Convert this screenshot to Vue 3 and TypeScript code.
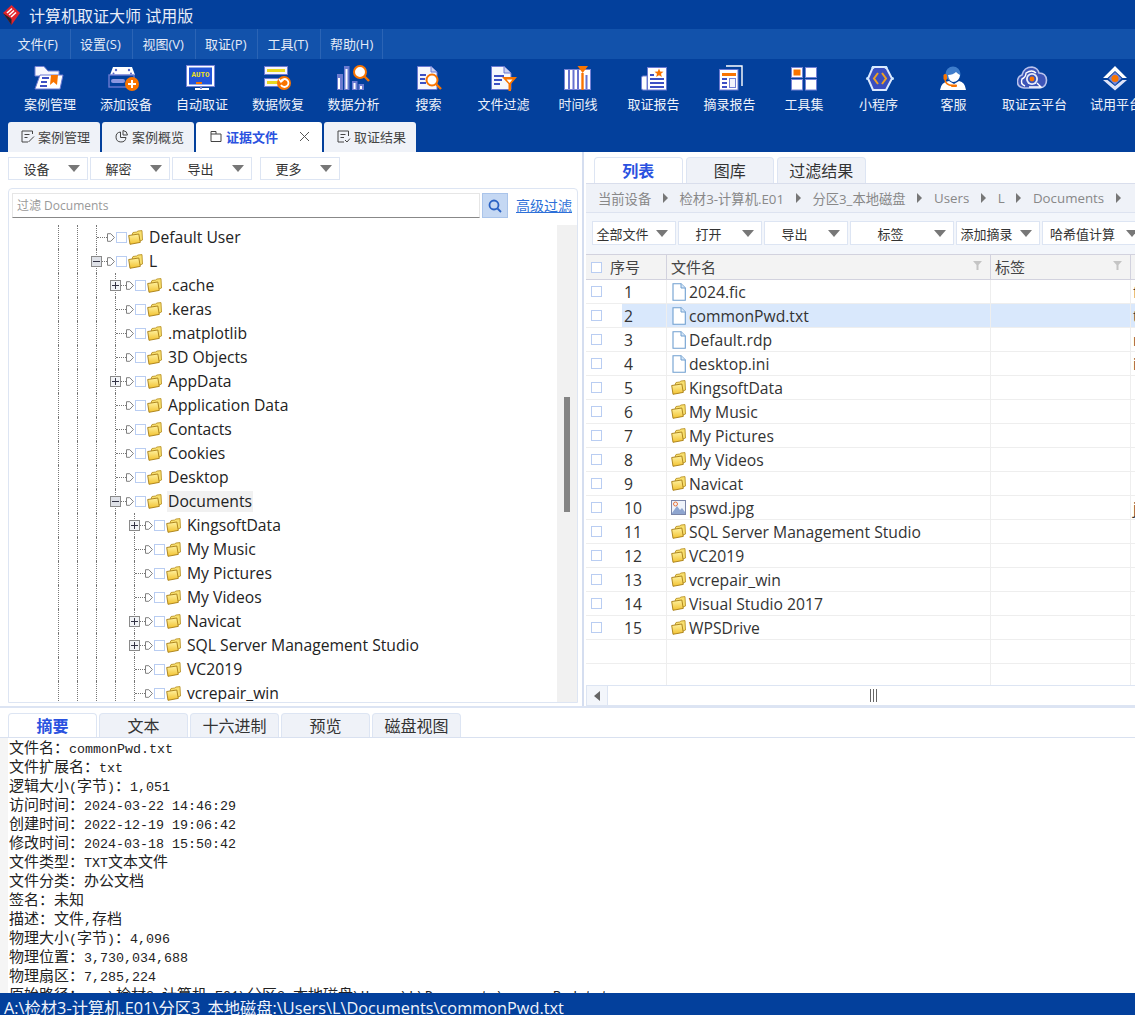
<script setup lang="ts">
interface Tool { label: string; icon: string; w: number }
interface Btn { label: string; w: number; mr?: number }
interface TreeRow { name: string; level: number; exp?: '+' | '-'; hover?: boolean }
interface FileRow { no: number; name: string; kind: 'file' | 'folder' | 'img'; ext?: string; sel?: boolean }

const menus = ['文件(F)', '设置(S)', '视图(V)', '取证(P)', '工具(T)', '帮助(H)']
const tools: Tool[] = [
  { label: '案例管理', icon: 'case', w: 76 },
  { label: '添加设备', icon: 'add', w: 76 },
  { label: '自动取证', icon: 'auto', w: 76 },
  { label: '数据恢复', icon: 'recover', w: 76 },
  { label: '数据分析', icon: 'analysis', w: 75 },
  { label: '搜索', icon: 'search', w: 75 },
  { label: '文件过滤', icon: 'filter', w: 75 },
  { label: '时间线', icon: 'timeline', w: 74 },
  { label: '取证报告', icon: 'report', w: 77 },
  { label: '摘录报告', icon: 'excerpt', w: 75 },
  { label: '工具集', icon: 'tools', w: 74 },
  { label: '小程序', icon: 'mini', w: 75 },
  { label: '客服', icon: 'service', w: 75 },
  { label: '取证云平台', icon: 'cloud', w: 87 },
  { label: '试用平台', icon: 'trial', w: 76 },
]
const leftBtns: Btn[] = [
  { label: '设备', w: 80, mr: 2 },
  { label: '解密', w: 80, mr: 2 },
  { label: '导出', w: 80, mr: 8 },
  { label: '更多', w: 80 },
]
const rightBtns: Btn[] = [
  { label: '全部文件', w: 84, mr: 2 },
  { label: '打开', w: 84, mr: 2 },
  { label: '导出', w: 84, mr: 2 },
  { label: '标签', w: 104, mr: 2 },
  { label: '添加摘录', w: 84, mr: 2 },
  { label: '哈希值计算', w: 104 },
]
const tree: TreeRow[] = [
  { name: 'Default User', level: 0 },
  { name: 'L', level: 0, exp: '-' },
  { name: '.cache', level: 1, exp: '+' },
  { name: '.keras', level: 1 },
  { name: '.matplotlib', level: 1 },
  { name: '3D Objects', level: 1 },
  { name: 'AppData', level: 1, exp: '+' },
  { name: 'Application Data', level: 1 },
  { name: 'Contacts', level: 1 },
  { name: 'Cookies', level: 1 },
  { name: 'Desktop', level: 1 },
  { name: 'Documents', level: 1, exp: '-', hover: true },
  { name: 'KingsoftData', level: 2, exp: '+' },
  { name: 'My Music', level: 2 },
  { name: 'My Pictures', level: 2 },
  { name: 'My Videos', level: 2 },
  { name: 'Navicat', level: 2, exp: '+' },
  { name: 'SQL Server Management Studio', level: 2, exp: '+' },
  { name: 'VC2019', level: 2 },
  { name: 'vcrepair_win', level: 2 },
]
const crumbs = ['当前设备', '检材3-计算机.E01', '分区3_本地磁盘', 'Users', 'L', 'Documents']
const files: FileRow[] = [
  { no: 1, name: '2024.fic', kind: 'file', ext: 'fic' },
  { no: 2, name: 'commonPwd.txt', kind: 'file', ext: 'txt', sel: true },
  { no: 3, name: 'Default.rdp', kind: 'file', ext: 'rdp' },
  { no: 4, name: 'desktop.ini', kind: 'file', ext: 'ini' },
  { no: 5, name: 'KingsoftData', kind: 'folder' },
  { no: 6, name: 'My Music', kind: 'folder' },
  { no: 7, name: 'My Pictures', kind: 'folder' },
  { no: 8, name: 'My Videos', kind: 'folder' },
  { no: 9, name: 'Navicat', kind: 'folder' },
  { no: 10, name: 'pswd.jpg', kind: 'img', ext: 'jpg' },
  { no: 11, name: 'SQL Server Management Studio', kind: 'folder' },
  { no: 12, name: 'VC2019', kind: 'folder' },
  { no: 13, name: 'vcrepair_win', kind: 'folder' },
  { no: 14, name: 'Visual Studio 2017', kind: 'folder' },
  { no: 15, name: 'WPSDrive', kind: 'folder' },
]
const bottomTabs = ['摘要', '文本', '十六进制', '预览', '磁盘视图']
const summary = [
  '文件名：commonPwd.txt',
  '文件扩展名：txt',
  '逻辑大小(字节)：1,051',
  '访问时间：2024-03-22 14:46:29',
  '创建时间：2022-12-19 19:06:42',
  '修改时间：2024-03-18 15:50:42',
  '文件类型：TXT文本文件',
  '文件分类：办公文档',
  '签名：未知',
  '描述：文件,存档',
  '物理大小(字节)：4,096',
  '物理位置：3,730,034,688',
  '物理扇区：7,285,224',
  '原始路径：...\\检材3-计算机.E01\\分区3_本地磁盘\\Users\\L\\Documents\\commonPwd.txt',
]
const segs = (s: string) =>
  s.split(/([\x00-\x7f]+)/).filter(Boolean).map((t) => ({ t, mono: /^[\x00-\x7f]+$/.test(t) }))
</script>

<template>
  <div class="app">
    <svg class="defs" width="0" height="0">
      <defs>
        <linearGradient id="fy" x1="0" y1="0" x2="0" y2="1">
          <stop offset="0" stop-color="#fff2a0" />
          <stop offset="1" stop-color="#f2c230" />
        </linearGradient>
        <symbol id="folder" viewBox="0 0 15 15">
          <path d="M4 4.5 L5 2.5 L8.5 2 L10 1 L14 .6 L14.5 10 L12 11 Z" fill="#f8df6e" stroke="#b48a1a" stroke-width=".8" />
          <path d="M.7 5.5 L10.8 4 L12.3 12.4 L2 14.3 Z" fill="url(#fy)" stroke="#a67c14" stroke-width=".9" />
        </symbol>
        <symbol id="file" viewBox="0 0 14 18">
          <path d="M1 .7 H9 L13.3 5 V17.3 H1 Z" fill="#fff" stroke="#6f9fd0" stroke-width="1.1" />
          <path d="M9 .7 V5 H13.3" fill="#d9e8f7" stroke="#6f9fd0" stroke-width="1" />
        </symbol>
        <symbol id="img" viewBox="0 0 15 15">
          <rect x=".5" y=".5" width="14" height="14" fill="#eef3fb" stroke="#7b86a8" />
          <path d="M1 13 L6 6 L9 10 L11 8 L14 12 V14 H1 Z" fill="#8ea5cf" />
          <circle cx="4.5" cy="4" r="2" fill="none" stroke="#e9743a" />
        </symbol>
        <symbol id="arrow" viewBox="0 0 8 9">
          <path d="M.5 .7 H3.8 L7.4 4.5 L3.8 8.3 H.5 Z" fill="#fff" stroke="#808080" />
        </symbol>
      </defs>
    </svg>

    <header class="head">
      <div class="title">
        <svg class="logo" width="17" height="20" viewBox="0 0 17 20">
          <path d="M8.5 0 L17 8 L8.5 20 L0 8 Z" fill="#e0242e" />
          <path d="M0 8 L8.5 20 V14 Z" fill="#23242c" />
          <path d="M4 8 L9 3.5 M6 10 L11 5.5 M8 12 L13 7.5" stroke="#fff" stroke-width="1.6" />
        </svg>
        <span>计算机取证大师 试用版</span>
      </div>
      <nav class="menu">
        <span v-for="m in menus" :key="m" class="menu-item">{{ m }}</span>
      </nav>
      <div class="tools">
        <div v-for="t in tools" :key="t.icon" class="tool" :style="{ width: t.w + 'px' }">
          <svg class="tool-ic" width="36" height="26" viewBox="0 0 36 26">
            <template v-if="t.icon === 'case'">
              <path d="M3 1.5 H12 L16 6 H27 V11 H3 Z" fill="#f6f7fd" stroke="#7582d6" />
              <path d="M8 10 H31 L28 24 H3 Z" fill="#fff" stroke="#6b79d2" />
              <path d="M10 13 H17 M9 17 H15 M8 21 H15" stroke="#3d50c4" stroke-width="2" />
              <path d="M19 10 H26 L25 20 L21.5 17 L18 20 Z" fill="#f97400" />
            </template>
            <template v-else-if="t.icon === 'add'">
              <path d="M5 2 H24 L27 10 H2 Z" fill="#fff" />
              <circle cx="8" cy="5" r="1.2" fill="#5566c8" /><circle cx="21" cy="5" r="1.2" fill="#5566c8" />
              <circle cx="5.5" cy="8.5" r="1" fill="#5566c8" /><circle cx="23" cy="8.5" r="1" fill="#5566c8" />
              <rect x="1" y="10" width="25" height="12" fill="none" stroke="#6b79d2" stroke-width="1.4" />
              <rect x="3" y="14" width="14" height="4" rx="2" fill="#8a97e0" />
              <circle cx="24" cy="19" r="7" fill="#f97400" />
              <path d="M20 19 H28 M24 15 V23" stroke="#fff" stroke-width="2" />
            </template>
            <template v-else-if="t.icon === 'auto'">
              <rect x="4" y="1.5" width="25" height="19" fill="#2255d8" stroke="#fff" stroke-width="2" />
              <rect x="2.5" y="0.5" width="28" height="21" fill="none" stroke="#7582d6" />
              <text x="16.5" y="12" text-anchor="middle" class="auto-text">AUTO</text>
              <rect x="12" y="17" width="6" height="2" fill="#f97400" />
              <path d="M11 24 H25" stroke="#fff" stroke-width="2" />
              <path d="M17 21 V24" stroke="#7582d6" stroke-width="2" />
            </template>
            <template v-else-if="t.icon === 'recover'">
              <rect x="4.5" y="1.5" width="23" height="8" fill="#f4f5fd" stroke="#6b79d2" />
              <rect x="7" y="4" width="18" height="3" fill="#e8d820" />
              <rect x="4.5" y="13.5" width="20" height="8" fill="#f4f5fd" stroke="#6b79d2" />
              <rect x="7" y="16" width="12" height="3" fill="#e8d820" />
              <circle cx="24" cy="18" r="7" fill="#f97400" />
              <path d="M21 16 A4 4 0 1 1 21 20" fill="none" stroke="#fff" stroke-width="1.8" />
              <path d="M19 14 L21 17 L23.5 15" fill="none" stroke="#fff" stroke-width="1.4" />
            </template>
            <template v-else-if="t.icon === 'analysis'">
              <rect x="1" y="9" width="6" height="16" fill="#6c7bd0" />
              <rect x="8" y="1" width="5.5" height="24" fill="#6c7bd0" />
              <rect x="16" y="16" width="5.5" height="9" fill="#6c7bd0" />
              <rect x="22.5" y="19" width="5.5" height="6" fill="#6c7bd0" />
              <path d="M3 13 V24 M10.5 4 V24 M18.5 18 V24 M25 21 V24" stroke="#fff" stroke-width="2" />
              <path d="M28 11 L33 16" stroke="#f97400" stroke-width="2.4" />
              <circle cx="24" cy="7" r="6" fill="#fff" stroke="#f97400" stroke-width="2" />
            </template>
            <template v-else-if="t.icon === 'search'">
              <path d="M6.5 1.5 H20 L26 7 V24.5 H6.5 Z" fill="#f6f7fd" stroke="#6b79d2" />
              <path d="M20 1.5 V7 H26" fill="#c9cff0" stroke="#6b79d2" />
              <path d="M9 10 H15 M9 14 H14 M9 18 H15" stroke="#3d50c4" stroke-width="2" />
              <path d="M25 19 L30 24" stroke="#f97400" stroke-width="2.4" />
              <circle cx="21" cy="15" r="5.5" fill="#fff" stroke="#f97400" stroke-width="2" />
            </template>
            <template v-else-if="t.icon === 'filter'">
              <path d="M5.5 1.5 H18 L25 8 V24.5 H5.5 Z" fill="#f6f7fd" stroke="#6b79d2" />
              <path d="M18 1.5 V8 H25" fill="#c9cff0" stroke="#6b79d2" />
              <path d="M8 11 H18 M8 15 H16 M8 19 H14" stroke="#3d50c4" stroke-width="2" />
              <path d="M16 12 H31 L25 19 V26 H22.5 V19 Z" fill="#f97400" />
              <path d="M20.5 14.5 H26.5 L23.5 18 Z" fill="#fff" />
            </template>
            <template v-else-if="t.icon === 'timeline'">
              <rect x="4.5" y="4.5" width="26" height="20" fill="#fff" stroke="#7582d6" />
              <path d="M9 5 V24 M13.5 5 V24 M18 5 V24 M26.5 10 V24" stroke="#6572cf" stroke-width="2" />
              <path d="M22.5 8 V25" stroke="#f97400" stroke-width="2.4" />
              <path d="M17.5 1 H28 L22.7 8 Z" fill="#f97400" />
            </template>
            <template v-else-if="t.icon === 'report'">
              <path d="M11 11 H7 Q5.5 11 5.5 13 V23 Q5.5 25 7 25 H11 Z" fill="#fff" stroke="#7582d6" />
              <rect x="11.5" y="2.5" width="19" height="22.5" fill="#fff" stroke="#6b79d2" />
              <path d="M14 10 H18 M14 14 H28 M14 18 H28 M14 22 H28" stroke="#3d50c4" stroke-width="2" />
              <path d="M23 3.5 L24.2 6.5 L27.5 6.7 L25 8.8 L25.8 12 L23 10.2 L20.2 12 L21 8.8 L18.5 6.7 L21.8 6.5 Z" fill="#f97400" />
            </template>
            <template v-else-if="t.icon === 'excerpt'">
              <path d="M14 1 H30 V21" fill="none" stroke="#fff" stroke-width="1.4" />
              <rect x="7.5" y="4.5" width="18.5" height="20.5" fill="#fff" stroke="#6b79d2" />
              <rect x="10" y="8" width="14" height="3" fill="#f97400" />
              <path d="M10 14 H15 M10 18 H15 M10 22 H15" stroke="#3d50c4" stroke-width="2" />
              <rect x="17.5" y="13.5" width="6" height="9" fill="#f3f4fb" stroke="#7582d6" />
            </template>
            <template v-else-if="t.icon === 'tools'">
              <rect x="5.5" y="2.5" width="11" height="10" fill="#fff" stroke="#7582d6" />
              <rect x="7.5" y="4.5" width="7" height="6" fill="#f97400" />
              <rect x="19.5" y="2.5" width="11" height="10" fill="#fff" stroke="#7582d6" />
              <rect x="5.5" y="14.5" width="11" height="10.5" fill="#fff" stroke="#7582d6" />
              <rect x="19.5" y="14.5" width="11" height="10.5" fill="#fff" stroke="#7582d6" />
            </template>
            <template v-else-if="t.icon === 'mini'">
              <path d="M12 2 H25 L31 13.5 L25 25 H12 L7 13.5 Z" fill="#3a4fc0" stroke="#dceaff" stroke-width="2" />
              <circle cx="12" cy="2.5" r="1.5" fill="#cfe8ff" /><circle cx="25" cy="2.5" r="1.5" fill="#cfe8ff" />
              <circle cx="6.5" cy="13.5" r="1.5" fill="#cfe8ff" /><circle cx="31.5" cy="13.5" r="1.5" fill="#cfe8ff" />
              <path d="M17 8 L13 13.5 L17 19 M21 8 L25 13.5 L21 19" fill="none" stroke="#f0a020" stroke-width="2" />
            </template>
            <template v-else-if="t.icon === 'service'">
              <path d="M4 25 Q5 17 13 16 L18 19 L23 16 Q29 17 30 25 Z" fill="#fff" />
              <circle cx="17" cy="9" r="7.5" fill="#3f7dcb" />
              <path d="M12 10 Q17 10 20 7 Q22 9 24 10 Q23 17 17 17 Q13 16 12 10 Z" fill="#fff" />
              <rect x="7.5" y="9" width="3.5" height="6" rx="1.5" fill="#f97400" />
              <path d="M9 15 Q10 20 16 20.5" fill="none" stroke="#f97400" stroke-width="1.4" />
              <rect x="15" y="19.5" width="6" height="2.5" rx="1" fill="#f97400" />
            </template>
            <template v-else-if="t.icon === 'cloud'">
              <path d="M7 23 Q0 22 0.5 16 Q1 11 5 10 Q7 2 15 2 Q21 3 22 8 Q29 8 29.5 15 Q29.5 22 23 23 Z" fill="#3d55b8" stroke="#b8c2ec" stroke-width="1.6" />
              <path d="M8 21 Q3 19 5 14 Q9 12 9 8 Q15 4 19 8" fill="none" stroke="#fff" stroke-width="1.4" />
              <circle cx="15" cy="14" r="6" fill="#e8ecfb" />
              <circle cx="15" cy="14" r="4.2" fill="#3d55b8" />
              <circle cx="15" cy="14" r="2.4" fill="#f97400" />
              <path d="M20 18 L24 22 H12" fill="none" stroke="#fff" stroke-width="1.4" />
            </template>
            <template v-else>
              <path d="M17 1 L29 13 L24.5 13 L17 6 L9.5 13 H5 Z" fill="#fff" />
              <path d="M5 15 H9.5 L17 21 L24.5 15 H29 L17 25.5 Z" fill="#dfe4f8" />
              <path d="M17 7 L23.5 13.5 L17 20 L10.5 13.5 Z" fill="#7a88d8" />
              <circle cx="17" cy="13.5" r="3.5" fill="#f97400" />
            </template>
          </svg>
          <span class="tool-label">{{ t.label }}</span>
        </div>
      </div>
      <div class="tabs">
        <div class="tab">
          <svg width="15" height="15" viewBox="0 0 15 15" fill="none" stroke="#444"><path d="M12.5 5 V2 H2 V13 H8 M4.5 5.5 H9.5 M4.5 8.5 H7.5 M8.5 13 L14 7.5" /></svg>
          <span>案例管理</span>
        </div>
        <div class="tab">
          <svg width="15" height="15" viewBox="0 0 15 15" fill="none" stroke="#444"><path d="M6.5 3 A5 5 0 1 0 12 8.5 H6.5 Z M9 1.5 A5 5 0 0 1 13.5 6 H9 Z" /></svg>
          <span>案例概览</span>
        </div>
        <div class="tab active">
          <svg width="15" height="15" viewBox="0 0 15 15" fill="none" stroke="#444"><path d="M3 5 V2.5 H8 V5 M3 5 V12.5 H13 V5 H3" /></svg>
          <span class="tab-on">证据文件</span>
          <svg class="close" width="11" height="11" viewBox="0 0 11 11" stroke="#555"><path d="M1 1 L10 10 M10 1 L1 10" /></svg>
        </div>
        <div class="tab">
          <svg width="15" height="15" viewBox="0 0 15 15" fill="none" stroke="#444"><path d="M8 13 H2 V2 H12.5 V7 M4.5 5.5 H9.5 M4.5 8.5 H8 M9 11 L11 13 L14 9.5" /></svg>
          <span>取证结果</span>
        </div>
      </div>
    </header>

    <main class="main">
      <section class="left">
        <div class="btns">
          <div v-for="b in leftBtns" :key="b.label" class="btn" :style="{ width: b.w + 'px', marginRight: (b.mr ?? 0) + 'px' }">
            <span class="btn-l">{{ b.label }}</span><i class="caret"></i>
          </div>
        </div>
        <div class="panel">
          <div class="filter">
            <div class="input">过滤 Documents</div>
            <div class="go">
              <svg width="16" height="16" viewBox="0 0 16 16" fill="none" stroke="#2a62c4" stroke-width="1.8"><circle cx="7" cy="7" r="4.5" /><path d="M10.5 10.5 L14 14" /></svg>
            </div>
            <a class="adv">高级过滤</a>
          </div>
          <div class="tree">
            <div class="rows">
              <div v-for="r in tree" :key="r.name" class="trow">
                <span v-for="g in r.level + 2" :key="g" class="guide"></span>
                <span class="stem">
                  <span v-if="r.exp" class="exp" :class="{ minus: r.exp === '-' }">
                    <i class="h"></i><i v-if="r.exp === '+'" class="v"></i>
                  </span>
                </span>
                <svg class="arr" width="8" height="9"><use href="#arrow" /></svg>
                <span class="cb"></span>
                <svg class="fold" width="15" height="15"><use href="#folder" /></svg>
                <span class="tname" :class="{ hov: r.hover }">{{ r.name }}</span>
              </div>
            </div>
            <div class="vscroll"><div class="thumb"></div></div>
          </div>
        </div>
      </section>

      <section class="right">
        <div class="rtabs">
          <div class="rtab active">列表</div>
          <div class="rtab">图库</div>
          <div class="rtab">过滤结果</div>
        </div>
        <div class="crumbs">
          <template v-for="c in crumbs" :key="c">
            <span>{{ c }}</span><i class="sep"></i>
          </template>
        </div>
        <div class="rbtns">
          <div v-for="b in rightBtns" :key="b.label" class="btn rb" :style="{ width: b.w + 'px', marginRight: (b.mr ?? 0) + 'px' }">
            <span class="btn-l">{{ b.label }}</span><i class="caret"></i>
          </div>
        </div>
        <div class="thead">
          <div class="c-chk"><span class="cb"></span></div>
          <div class="c-no th">序号</div>
          <div class="c-name th">文件名
            <svg class="flt" width="11" height="11" viewBox="0 0 11 11"><path d="M1 1 H10 L6.5 5 V10 H4.5 V5 Z" fill="#c4c4c4" /></svg>
          </div>
          <div class="c-tag th">标签
            <svg class="flt" width="11" height="11" viewBox="0 0 11 11"><path d="M1 1 H10 L6.5 5 V10 H4.5 V5 Z" fill="#c4c4c4" /></svg>
          </div>
          <div class="c-ext"></div>
        </div>
        <div class="tbody">
          <div v-for="f in files" :key="f.no" class="row" :class="{ sel: f.sel }">
            <div class="c-chk"><span class="cb"></span></div>
            <div class="c-no">{{ f.no }}</div>
            <div class="c-name">
              <svg v-if="f.kind === 'file'" class="ic ic-file" width="14" height="18"><use href="#file" /></svg>
              <svg v-else-if="f.kind === 'img'" class="ic" width="15" height="15"><use href="#img" /></svg>
              <svg v-else class="ic" width="15" height="15"><use href="#folder" /></svg>
              <span class="fname">{{ f.name }}</span>
            </div>
            <div class="c-tag"></div>
            <div class="c-ext">{{ f.ext }}</div>
          </div>
          <div v-for="n in 2" :key="'b' + n" class="row">
            <div class="c-chk"></div><div class="c-no"></div><div class="c-name"></div><div class="c-tag"></div><div class="c-ext"></div>
          </div>
        </div>
        <div class="hscroll">
          <div class="hleft"><i class="tri"></i></div>
          <div class="htrack"><span class="grip"><i></i><i></i><i></i></span></div>
        </div>
      </section>
    </main>

    <section class="bottom">
      <div class="btabs">
        <div v-for="(t, i) in bottomTabs" :key="t" class="btab" :class="{ active: i === 0 }">{{ t }}</div>
      </div>
      <div class="summary">
        <div v-for="l in summary" :key="l" class="line">
          <span v-for="(s, i) in segs(l)" :key="i" :class="{ mono: s.mono }">{{ s.t }}</span>
        </div>
      </div>
    </section>

    <footer class="status">A:\检材3-计算机.E01\分区3_本地磁盘:\Users\L\Documents\commonPwd.txt</footer>
  </div>
</template>

<style scoped>
.app {
  width: 1135px;
  height: 1015px;
  overflow: hidden;
  display: flex;
  flex-direction: column;
  background: #fff;
  color: #333;
  font-family: "Open Sans", "Noto Sans CJK SC", sans-serif;
}
.defs { position: absolute; }
.head { background: #03409c; height: 152px; flex: none; color: #fff; display: flex; flex-direction: column; }
.title { height: 29px; display: flex; align-items: center; padding-left: 3px; gap: 9px; font-size: 16px; color: #e8edf8; }
.logo { flex: none; }
.menu { height: 30px; background: #1252ab; display: flex; padding-left: 8px; font-size: 13px; color: #e4ebf8; }
.menu-item { padding: 0 0 0 9.5px; line-height: 30px; width: 62.5px; box-sizing: border-box; white-space: nowrap; border-right: 1px solid #2b64b5; }
.tools { height: 63px; display: flex; padding-left: 12px; overflow: hidden; flex: none; }
.tool { flex: none; display: flex; flex-direction: column; align-items: center; padding-top: 6px; box-sizing: border-box; }
.tool-ic { flex: none; }
.auto-text { font: bold 7.5px "Liberation Mono", monospace; fill: #f0e020; }
.tool-label { font-size: 13px; line-height: 18px; margin-top: 4px; white-space: nowrap; color: #eef2fb; }
.tabs { height: 30px; display: flex; padding-left: 8px; gap: 2px; flex: none; }
.tab {
  width: 92px;
  box-sizing: border-box;
  display: flex;
  align-items: center;
  gap: 3px;
  padding: 0 0 2px 12px;
  font-size: 13px;
  background: #eff2f8;
  color: #444;
  border-radius: 3px 3px 0 0;
}
.tab.active { width: 126px; background: #fff; position: relative; }
.tab-on { color: #2a52e0; font-weight: 700; }
.close { margin-left: 18px; }

.main { height: 556px; flex: none; display: flex; border-bottom: 2px solid #dce4f3; box-sizing: border-box; }
.left { width: 582px; flex: none; box-sizing: border-box; padding: 5px 0 0 8px; }
.btns { display: flex; }
.btn {
  height: 23px;
  flex: none;
  box-sizing: border-box;
  border: 1px solid #dde5f3;
  display: flex;
  align-items: center;
  padding-right: 7px;
  font-size: 13px;
  color: #333;
  background: #fff;
}
.btn-l { flex: 1; text-align: center; white-space: nowrap; padding-right: 4px; }
.caret { width: 0; height: 0; border-left: 6px solid transparent; border-right: 6px solid transparent; border-top: 7px solid #777; flex: none; }
.panel {
  margin-top: 8px;
  width: 570px;
  height: 515px;
  box-sizing: border-box;
  border: 1px solid #dde5f3;
  border-radius: 4px 4px 0 0;
  display: flex;
  flex-direction: column;
}
.filter { display: flex; align-items: stretch; height: 25px; padding: 4px 3px 0; flex: none; }
.input {
  width: 468px;
  box-sizing: border-box;
  padding-left: 4px;
  font-size: 12px;
  line-height: 24px;
  color: #999;
  border: 1px solid #e6e6e6;
  border-bottom: 1px solid #888;
}
.go {
  width: 26px;
  margin-left: 2px;
  background: #c5d8f3;
  border: 1px solid #aac4ea;
  box-sizing: border-box;
  display: flex;
  align-items: center;
  justify-content: center;
}
.adv { margin-left: 8px; font-size: 14px; line-height: 25px; color: #2d6fd8; text-decoration: underline; white-space: nowrap; }
.tree { flex: 1; min-height: 0; display: flex; margin-top: 7px; overflow: hidden; }
.rows { flex: 1; min-width: 0; padding-left: 49px; overflow: hidden; }
.trow { height: 24px; display: flex; align-items: center; font-size: 15.7px; color: #222; white-space: nowrap; }
.guide { width: 19px; flex: none; align-self: stretch; box-sizing: border-box; border-left: 1px dotted #777; }
.stem { width: 11px; flex: none; align-self: stretch; box-sizing: border-box; border-left: 1px dotted #777; position: relative; }
.stem::after { content: ""; position: absolute; left: 0; right: 0; top: 12px; border-top: 1px dotted #777; }
.exp {
  position: absolute;
  left: -6px;
  top: 7px;
  width: 11px;
  height: 11px;
  box-sizing: border-box;
  border: 1px solid #8a8a8a;
  background: #f2f4f7;
  z-index: 1;
}
.exp.minus { background: #dfe2e8; }
.exp .h { position: absolute; left: 1px; right: 1px; top: 4px; height: 1px; background: #334; }
.exp .v { position: absolute; top: 1px; bottom: 1px; left: 4px; width: 1px; background: #334; }
.arr { flex: none; }
.cb { width: 11px; height: 11px; flex: none; box-sizing: border-box; border: 1px solid #b9cdf2; background: #fff; display: block; }
.trow .cb { margin-left: 1px; }
.fold { flex: none; margin-left: 1px; }
.tname { margin-left: 5px; padding: 0 1px; line-height: 21px; }
.hov { background: #f1f1f1; }
.vscroll { width: 20px; flex: none; background: #f1f1f1; margin-right: 0; }
.thumb { width: 6px; height: 115px; margin: 172px 0 0 7px; background: #848484; }

.right { flex: 1; min-width: 0; border-left: 2px solid #d5def0; display: flex; flex-direction: column; overflow: hidden; padding-left: 2px; }
.rtabs { display: flex; height: 26px; margin-top: 5px; padding-left: 8px; gap: 3px; flex: none; }
.rtab, .btab {
  width: 88.5px;
  box-sizing: border-box;
  text-align: center;
  font-size: 16px;
  line-height: 26px;
  background: #eff2f8;
  color: #333;
  border: 1px solid #dde5f3;
  border-bottom: 0;
  border-radius: 4px 4px 0 0;
}
.rtab.active, .btab.active { background: #fff; color: #2a52e0; font-weight: 700; }
.crumbs {
  height: 30px;
  flex: none;
  display: flex;
  align-items: center;
  box-sizing: border-box;
  padding-left: 12px;
  background: #eff2f8;
  border-top: 1px solid #d9deec;
  border-bottom: 1px solid #dde3f0;
  font-size: 13.3px;
  color: #888;
  white-space: nowrap;
}
.sep { width: 0; height: 0; margin: 0 11.7px; border-top: 5px solid transparent; border-bottom: 5px solid transparent; border-left: 5px solid #777; flex: none; }
.rbtns { height: 41px; flex: none; box-sizing: border-box; padding: 8px 0 0 6px; background: #f3f6fb; display: flex; overflow: hidden; }
.rb { height: 24px; }
.thead, .row { display: flex; flex: none; }
.thead { height: 26px; box-sizing: border-box; background: #f3f3f3; border-top: 1px solid #d2d2de; border-bottom: 1px solid #d2d2de; align-items: stretch; font-size: 15px; color: #444; }
.c-chk { width: 36px; flex: none; box-sizing: border-box; padding-left: 5px; display: flex; align-items: center; }
.c-no { width: 44px; flex: none; box-sizing: border-box; padding-left: 2px; }
.c-name { width: 324px; flex: none; box-sizing: border-box; padding-left: 4px; border-left: 1px solid #eee; display: flex; align-items: center; position: relative; white-space: nowrap; }
.c-tag { width: 140px; flex: none; box-sizing: border-box; padding-left: 4px; border-left: 1px solid #eee; position: relative; }
.c-ext { flex: 1; box-sizing: border-box; padding-left: 2px; border-left: 1px solid #eee; white-space: nowrap; }
.thead .c-no { padding-left: 0; margin-left: -12px; width: 56px; line-height: 24px; }
.thead .c-name, .thead .c-tag, .thead .c-ext { border-left: 1px solid #d2d2de; line-height: 24px; }
.flt { position: absolute; right: 7px; top: 5px; }
.tbody { flex: 1; min-height: 0; overflow: hidden; font-size: 15.7px; color: #333; }
.row { height: 24px; box-sizing: border-box; border-bottom: 1px solid #eee; line-height: 25px; }
.fname { margin-top: 1px; line-height: 23px; }
.row.sel .c-no, .row.sel .c-name, .row.sel .c-tag, .row.sel .c-ext { background: #d9e8fc; }
.ic { margin-right: 3px; flex: none; }
.ic-file { margin-left: 1px; }
.hscroll { height: 21px; flex: none; box-sizing: border-box; border: 1px solid #dde5f3; border-right: 0; display: flex; }
.hleft { width: 21px; background: #f3f6fb; border-right: 1px solid #dde5f3; display: flex; align-items: center; justify-content: center; box-sizing: border-box; }
.tri { width: 0; height: 0; border-top: 5px solid transparent; border-bottom: 5px solid transparent; border-right: 6px solid #666; }
.htrack { flex: 1; display: flex; align-items: center; padding-left: 262px; }
.grip { display: flex; gap: 2px; }
.grip i { width: 1px; height: 13px; background: #666; display: block; }

.bottom { flex: 1; min-height: 0; display: flex; flex-direction: column; overflow: hidden; background: #f5f5f5; }
.btabs { height: 30px; flex: none; box-sizing: border-box; padding: 5px 0 0 8px; display: flex; gap: 2px; background: #fff; border-bottom: 1px solid #d9e1f0; }
.btab { width: 89px; line-height: 25px; }
.summary { flex: 1; min-height: 0; overflow: hidden; margin-left: 8px; padding: 0 0 0 1px; background: #fff; color: #222; }
.line { height: 19px; line-height: 19px; font-size: 15px; white-space: nowrap; }
.mono { font-family: "Liberation Mono", monospace; font-size: 13.33px; }
.status { height: 22px; flex: none; background: #03409c; color: #f0f4fb; font-size: 16.3px; line-height: 30px; padding-left: 4px; overflow: hidden; white-space: nowrap; }
</style>

<style>
html, body { margin: 0; overflow: hidden; background: #fff; }
</style>
